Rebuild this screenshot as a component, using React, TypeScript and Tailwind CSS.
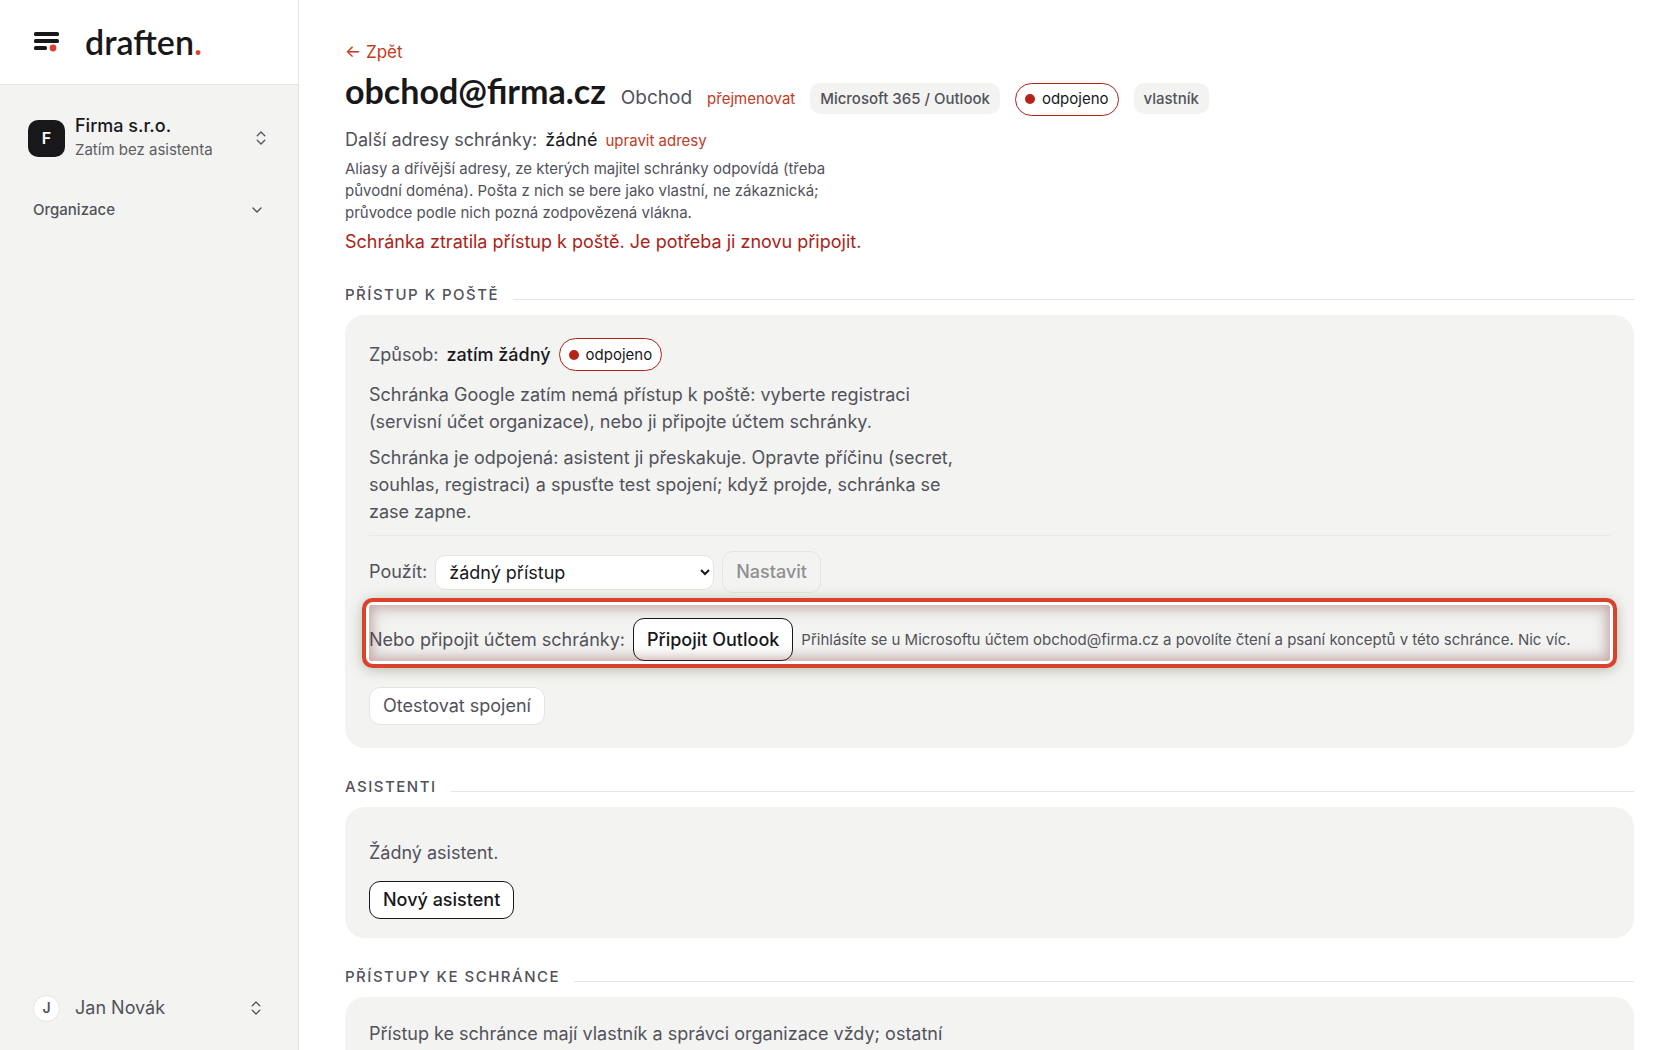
import React from "react";
import { ChevronDown, ChevronsUpDown } from "lucide-react";

function StatusPill() {
  return (
    <span className="inline-flex h-[33px] items-center gap-[7px] rounded-full border border-[#ab2318] bg-white px-[9px] text-[15px] text-[#18181b]">
      <span className="size-[10px] rounded-full bg-[#b42318]" />
      odpojeno
    </span>
  );
}

function Tag({ children }: { children: React.ReactNode }) {
  return (
    <span className="inline-flex h-[31px] items-center rounded-[10px] bg-[#f3f3f1] px-[10px] text-[15px] font-medium text-[#52525b]">
      {children}
    </span>
  );
}

function Section({ title, className, children }: { title: string; className: string; children: React.ReactNode }) {
  return (
    <section className="mt-[27px]">
      <div className="flex h-6 items-center gap-[14px]">
        <h2 className="text-[15px] font-medium tracking-[1.5px] text-[#52525b] uppercase">{title}</h2>
        <span className="mt-2 h-px flex-1 bg-[#e4e4e1]" />
      </div>
      <div className={"mt-2 rounded-[20px] bg-[#f3f3f1] px-6 " + className}>{children}</div>
    </section>
  );
}

function Sidebar() {
  return (
    <aside className="flex w-[299px] shrink-0 flex-col border-r border-[#e4e4e1] bg-[#f3f3f1]">
      <div className="flex h-[85px] items-center gap-6 border-b border-[#e4e4e1] bg-white pl-[33px]">
        <svg width="28" height="24" viewBox="0 0 28 24" aria-hidden="true">
          <g fill="#18181b">
            <rect x="1" y="2" width="25" height="4" rx="1.6" />
            <rect x="1" y="9" width="25" height="4" rx="1.6" />
            <rect x="1" y="16" width="13" height="4" rx="1.6" />
          </g>
          <circle cx="20" cy="18" r="3.4" fill="#d9432b" />
        </svg>
        <span className="font-[Lato,sans-serif] text-[34px] leading-none font-semibold text-[#18181b]">
          draften<span className="text-[#d9432b]">.</span>
        </span>
      </div>
      <button className="mx-[28px] mt-[29px] flex items-center gap-[10px] text-left">
        <span className="flex size-[37px] items-center justify-center rounded-[10px] bg-[#18181b] text-base font-semibold text-white">F</span>
        <span className="flex flex-1 flex-col">
          <span className="text-lg leading-6 font-medium text-[#18181b]">Firma s.r.o.</span>
          <span className="text-[15px] leading-6 text-[#5d5d63]">Zatím bez asistenta</span>
        </span>
        <ChevronsUpDown size={18} strokeWidth={1.75} className="text-[#52525b]" />
      </button>
      <button className="mx-[33px] mt-9 flex items-center justify-between text-[15px] leading-6 font-medium text-[#52525b]">
        Organizace
        <ChevronDown size={16} strokeWidth={2} />
      </button>
      <button className="mx-[33px] mt-auto mb-[28px] flex items-center text-left">
        <span className="flex size-[27px] items-center justify-center rounded-full border border-[#e4e4e1] bg-white text-sm font-semibold text-[#52525b]">J</span>
        <span className="ml-[15px] flex-1 text-lg text-[#52525b]">Jan Novák</span>
        <ChevronsUpDown size={18} strokeWidth={1.75} className="text-[#52525b]" />
      </button>
    </aside>
  );
}

export default function App() {
  return (
    <div className="flex h-screen overflow-hidden bg-white font-[Inter,sans-serif] text-lg text-[#52525b]">
      <Sidebar />
      <main className="min-w-0 flex-1 overflow-y-auto px-[46px] pt-[38px] [scrollbar-width:none]">
        <a href="#zpet" className="block text-[17px] leading-7 text-[#c23a22]">← Zpět</a>
        <header className="flex items-baseline gap-[15px]">
          <h1 className="font-[Lato,sans-serif] text-[34px] leading-[50px] font-bold text-[#18181b]">obchod@firma.cz</h1>
          <span className="text-[19px]">Obchod</span>
          <a href="#prejmenovat" className="text-[15px] text-[#c23a22]">přejmenovat</a>
          <Tag>Microsoft 365 / Outlook</Tag>
          <StatusPill />
          <Tag>vlastník</Tag>
        </header>
        <div className="mt-[10px] flex items-baseline gap-2 leading-7">
          <span>Další adresy schránky:</span>
          <span className="text-[#18181b]">žádné</span>
          <a href="#adresy" className="text-[15px] text-[#c23a22]">upravit adresy</a>
        </div>
        <p className="mt-[3px] max-w-[500px] text-[15px] leading-[22px]">
          Aliasy a dřívější adresy, ze kterých majitel schránky odpovídá (třeba původní doména). Pošta z nich se bere jako vlastní, ne zákaznická; průvodce podle nich pozná zodpovězená vlákna.
        </p>
        <p className="mt-1 leading-7 text-[#ab2318]">Schránka ztratila přístup k poště. Je potřeba ji znovu připojit.</p>

        <Section title="Přístup k poště" className="pt-[23px] pb-[23px]">
          <div className="flex items-center gap-2">
            <span>Způsob:</span>
            <span className="font-medium text-[#18181b]">zatím žádný</span>
            <StatusPill />
          </div>
          <p className="mt-[10px] max-w-[600px] leading-[27px]">
            Schránka Google zatím nemá přístup k poště: vyberte registraci (servisní účet organizace), nebo ji připojte účtem schránky.
          </p>
          <p className="mt-[9px] max-w-[600px] leading-[27px]">
            Schránka je odpojená: asistent ji přeskakuje. Opravte příčinu (secret, souhlas, registraci) a spusťte test spojení; když projde, schránka se zase zapne.
          </p>
          <div className="mt-[10px] flex items-center gap-2 border-t border-[#e9e9e6] pt-[15px]">
            <label htmlFor="pristup">Použít:</label>
            <select id="pristup" className="h-[35px] w-[279px] rounded-[10px] border border-[#e4e4e1] bg-white px-[9px] text-[#18181b]">
              <option>žádný přístup</option>
            </select>
            <button disabled className="h-[42px] rounded-[11px] border border-[#e4e4e1] px-[13px] font-medium text-[#8f8f93]">Nastavit</button>
          </div>
          <div className="relative mt-3 flex items-center gap-2 pt-[13px]">
            <label htmlFor="outlook" className="shrink-0">Nebo připojit účtem schránky:</label>
            <button id="outlook" className="h-[43px] shrink-0 rounded-[11px] border border-[#18181b] bg-white px-[13px] font-medium text-[#18181b]">Připojit Outlook</button>
            <span className="text-[15px]">Přihlásíte se u Microsoftu účtem obchod@firma.cz a povolíte čtení a psaní konceptů v této schránce. Nic víc.</span>
            <span className="pointer-events-none absolute inset-0 rounded-[4px] shadow-[inset_0_0_8px_4px_rgba(180,60,60,0.24),inset_0_0_16px_4px_rgba(40,50,50,0.16),0_0_0_3px_#fff,0_0_0_7px_#d9432b,0_2px_14px_6px_rgba(80,80,60,0.4)]" />
          </div>
          <button className="mt-[26px] block h-[38px] rounded-[11px] border border-[#e4e4e1] bg-white px-[13px]">Otestovat spojení</button>
        </Section>

        <Section title="Asistenti" className="pt-8 pb-[19px]">
          <p className="leading-7">Žádný asistent.</p>
          <button className="mt-[14px] h-[38px] rounded-[11px] border border-[#18181b] bg-white px-[13px] font-medium text-[#18181b]">Nový asistent</button>
        </Section>

        <Section title="Přístupy ke schránce" className="pt-[23px] pb-[23px]">
          <p className="max-w-[600px] leading-[27px]">Přístup ke schránce mají vlastník a správci organizace vždy; ostatní</p>
        </Section>
      </main>
    </div>
  );
}
